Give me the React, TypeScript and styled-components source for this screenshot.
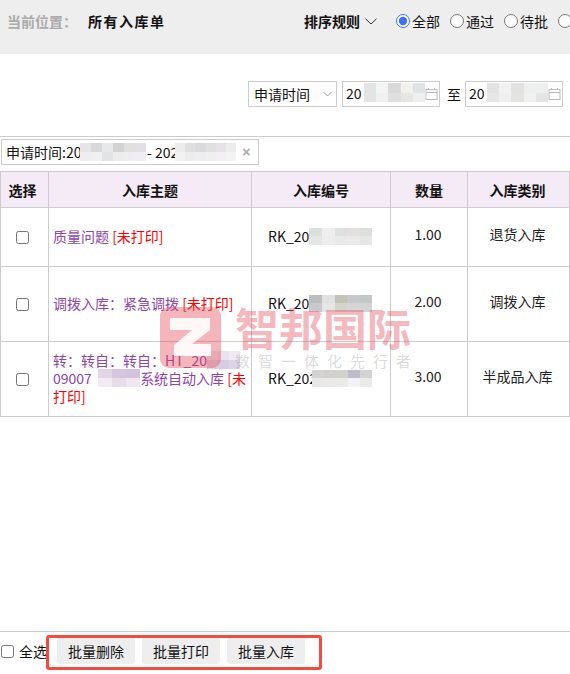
import React from 'react';
import styled, { createGlobalStyle } from 'styled-components';

const FONT = '"Noto Sans CJK SC", "Liberation Sans", sans-serif';
const BORDER = '#ccc';

const GlobalStyle = createGlobalStyle`
  html, body { margin: 0; padding: 0; background: #fff; }
  body { font-family: ${FONT}; font-size: 14px; color: #222; }
`;

const Page = styled.div`
  position: relative;
  width: 570px;
  height: 674px;
  overflow: hidden;
  display: flex;
  flex-direction: column;
`;

const Header = styled.header`
  height: 54px;
  flex: none;
  background: #eee;
  display: flex;
  align-items: flex-start;
  padding: 12px 0 0 7px;
  box-sizing: border-box;
  line-height: 18px;
  white-space: nowrap;
`;

const Crumb = styled.span`
  flex: none;
  color: #aaa;
  font-weight: 700;
  width: 81px;
`;

const CrumbCurrent = styled.span`
  flex: none;
  color: #111;
  font-weight: 700;
  letter-spacing: 1.5px;
  width: 216px;
`;

const SortLabel = styled.span`
  flex: none;
  display: flex;
  align-items: center;
  gap: 5px;
  color: #111;
  font-weight: 700;
  width: 92px;
`;

const RadioGroup = styled.div`
  flex: none;
  display: flex;
  gap: 10px;
`;

const RadioLabel = styled.label`
  display: flex;
  align-items: center;
  gap: 2px;
  height: 18px;
  color: #111;
`;

const Radio = styled.input`
  margin: 0;
  width: 14px;
  height: 14px;
  accent-color: #3f6ff5;
`;

const FilterBar = styled.div`
  height: 83px;
  flex: none;
  box-sizing: border-box;
  border-bottom: 1px solid ${BORDER};
  display: flex;
  justify-content: flex-end;
  align-items: flex-start;
  padding: 27px 7px 0 0;
  color: #111;
`;

const SelectBox = styled.div`
  width: 89px;
  height: 26px;
  box-sizing: border-box;
  border: 1px solid ${BORDER};
  display: flex;
  align-items: center;
  justify-content: space-between;
  padding: 0 4px 0 5px;
  margin-right: 5px;
`;

const DateBox = styled.div`
  width: 98px;
  height: 26px;
  box-sizing: border-box;
  border: 1px solid ${BORDER};
  display: flex;
  align-items: center;
  padding: 0 2px;
`;

const DateText = styled.span`
  width: 18px;
  flex: none;
  margin-left: 1px;
  margin-top: -2px;
`;

const DateBlur = styled.span`
  display: flex;
  flex: none;
  margin-top: -3px;
`;

const To = styled.span`
  line-height: 26px;
  margin: 0 4px 0 7px;
`;

const TagRow = styled.div`
  flex: none;
  height: 34px;
  padding: 2px 0 0 1px;
  box-sizing: border-box;
`;

const Tag = styled.div`
  width: 258px;
  height: 26px;
  box-sizing: border-box;
  border: 1px solid ${BORDER};
  display: flex;
  align-items: center;
  padding-left: 4px;
  color: #111;
  white-space: nowrap;
`;

const TagLead = styled.span`
  width: 74px;
  flex: none;
`;

const TagSep = styled.span`
  margin-left: 1px;
  width: 28px;
  flex: none;
`;

const TagClose = styled.span`
  margin-left: 6px;
  color: #aaa;
  font-size: 14px;
  font-weight: 700;
  font-family: "Liberation Sans", sans-serif;
`;

const Table = styled.table`
  width: 569px;
  table-layout: fixed;
  border-collapse: collapse;
  flex: none;
`;

const Th = styled.th<{ $shift?: number }>`
  height: 35px;
  padding: 0 ${(p) => p.$shift ?? 0}px 0 0;
  background: #f5ebf7;
  border: 1px solid ${BORDER};
  font-weight: 700;
  color: #111;
  line-height: 18px;
`;

const Row = styled.tr<{ $height: number }>`
  height: ${(p) => p.$height}px;
`;

const Td = styled.td`
  padding: 0;
  border: 1px solid ${BORDER};
  text-align: center;
  line-height: 18px;
  color: #222;
`;

const CheckCell = styled(Td)`
  padding-right: 5px;
`;

const TitleCell = styled(Td)`
  text-align: left;
  padding: 0 4px 2px;
  color: #8e44ad;
`;

const NotPrinted = styled.span`
  color: #f00;
`;

const CodeCell = styled(Td)`
  text-align: left;
  padding: 0 0 2px 16px;
`;

const ValueCell = styled(Td)`
  padding: 0 2px 6px 0;
`;

const Code = styled.div`
  display: flex;
  align-items: center;
  color: #111;
`;

const Box = styled.input`
  margin: 0;
  width: 13px;
  height: 13px;
`;

const CellBox = styled(Box)`
  display: block;
  margin: 0 auto;
`;

const Footer = styled.footer`
  position: relative;
  margin-top: auto;
  flex: none;
  height: 43px;
  box-sizing: border-box;
  border-top: 1px solid ${BORDER};
  display: flex;
  align-items: flex-start;
  padding: 6px 0 0 1px;
`;

const SelectAll = styled.label`
  display: flex;
  align-items: center;
  gap: 5px;
  height: 26px;
  width: 56px;
  flex: none;
  color: #111;
  line-height: 18px;
`;

const Buttons = styled.div`
  display: flex;
  gap: 7px;
`;

const BatchButton = styled.button`
  width: 78px;
  height: 26px;
  padding: 0;
  border: 0;
  border-radius: 3px;
  background: #eee;
  color: #111;
  font-family: ${FONT};
  font-size: 14px;
`;

const Highlight = styled.div`
  position: absolute;
  left: 46px;
  top: 3px;
  width: 276px;
  height: 35px;
  box-sizing: border-box;
  border: 3px solid #f44a40;
  border-radius: 3px;
  pointer-events: none;
`;

const MosaicGrid = styled.span<{ $cols: number; $w: number; $h: number; $overlap: number }>`
  display: inline-grid;
  grid-template-columns: repeat(${(p) => p.$cols}, ${(p) => p.$w}px);
  grid-auto-rows: ${(p) => p.$h}px;
  vertical-align: top;
  flex: none;
  margin-left: ${(p) => -p.$overlap}px;
`;

const MosaicCell = styled.span<{ $c: string }>`
  background: ${(p) => p.$c};
`;

type MosaicProps = { colors: string[]; cols: number; w: number; h: number; overlap?: number };

const Mosaic = ({ colors, cols, w, h, overlap = 0 }: MosaicProps) => (
  <MosaicGrid $cols={cols} $w={w} $h={h} $overlap={overlap}>
    {colors.map((c, i) => (
      <MosaicCell key={i} $c={c} />
    ))}
  </MosaicGrid>
);

const Watermark = styled.div`
  position: absolute;
  left: 160px;
  top: 307px;
  display: flex;
  gap: 14px;
  pointer-events: none;
`;

const WatermarkText = styled.div`
  display: flex;
  flex-direction: column;
  width: 176px;
`;

const WatermarkName = styled.div`
  font-size: 44px;
  line-height: 41px;
  font-weight: 700;
  color: rgba(228, 70, 85, 0.4);
  white-space: nowrap;
`;

const WatermarkSlogan = styled.div`
  margin-top: 4px;
  font-size: 15px;
  line-height: 18px;
  color: rgba(130, 130, 130, 0.3);
  display: flex;
  justify-content: space-between;
`;

const Chevron = () => (
  <svg width="12" height="7" viewBox="0 0 12 7" fill="none" stroke="#333" strokeWidth="1">
    <path d="M0.5 0.8 L6 6 L11.5 0.8" />
  </svg>
);

const SmallChevron = () => (
  <svg width="9" height="6" viewBox="0 0 9 6" fill="none" stroke="#999" strokeWidth="1">
    <path d="M0.5 1 L4.5 5 L8.5 1" />
  </svg>
);

const CalendarIcon = () => (
  <svg width="13" height="12" viewBox="0 0 13 12" fill="none" stroke="#bbb" strokeWidth="1" style={{ flex: 'none' }}>
    <rect x="1" y="1.5" width="11" height="10" />
    <path d="M1 4.5 H12 M3.5 0 V2 M9.5 0 V2" />
  </svg>
);

const Logo = () => (
  <svg width="61" height="61" viewBox="0 0 61 61">
    <rect width="61" height="61" rx="9" fill="rgba(228, 70, 85, 0.4)" />
    <path d="M10 11 H50 V23 L32 37 H51 V49 H14 V38 L32 23 H10 Z" fill="#fff" fillOpacity="0.9" />
  </svg>
);

const date1 = ['#e3e5e5', '#f4f4f4', '#d9d9d9', '#f1f1ee', '#dfe3e4', '#e3e5e5', '#f1f1f1', '#dfdfdf', '#e5e5e2', '#eef0f0'];
const date2 = ['#e3e3e3', '#f2f2f2', '#e2e2e2', '#eef0f0', '#eeeeee', '#e6e6e6', '#efefef', '#e3e3e0', '#f1f1ef', '#e5e5e5'];
const tag1 = ['#e5e5e8', '#d8d8d8', '#e7e7e7', '#d3d3d3', '#e0e0e0', '#e2e0e6', '#eeeeee', '#f0f0f0', '#e2e3e5', '#ececec', '#ededf0', '#efeff2'];
const tag2 = ['#ececec', '#dfdfdf', '#dadadd', '#e0e0e0', '#e6e2e6', '#ececec', '#f2f2f2', '#ececec', '#eeeeee', '#efefef', '#f2f0f2', '#f3f3f3'];
const code1 = ['#dcdfdc', '#eeeeee', '#dedfdf', '#e3e0e0', '#dcdfdc', '#e5e5e5', '#ececec', '#e9e9e9', '#eaeaea', '#e6e6e6'];
const code2 = ['#bcbec0', '#e0dfe2', '#c2c2b6', '#c8c8ca', '#c3c7c5', '#c9c9c9', '#e6e6e6', '#d4d4ca', '#d5d5d5', '#d2d5d3'];
const code3 = ['#d3d3d3', '#d2cfcf', '#d3d3cd', '#bfbccb', '#d1d4d2', '#e8e8e8', '#eae8e8', '#ebebe8', '#f3f3f5', '#ebecea'];
const title1 = ['#efe9f3', '#e8e2ee', '#efe9f3', '#dcd3e6', '#d6cbe2', '#dcd3e6'];
const title2 = ['#e2d6e6', '#d6c5de', '#d2c2dc', '#f1ecf3', '#e8dcea', '#efe6f2'];

const rows = [
  { height: 59, qty: '1.00', kind: '退货入库', colors: code1, prefix: 'RK_20', cw: 12.6, overlap: 0 },
  { height: 75, qty: '2.00', kind: '调拨入库', colors: code2, prefix: 'RK_20', cw: 12.6, overlap: 0 },
  { height: 75, qty: '3.00', kind: '半成品入库', colors: code3, prefix: 'RK_202', cw: 12, overlap: 5 },
];

const COLON = '\uFF1A';

const titles = [
  <>质量问题 <NotPrinted>[未打印]</NotPrinted></>,
  <>调拨入库{COLON}紧急调拨 <NotPrinted>[未打印]</NotPrinted></>,
  <>
    转{COLON}转自{COLON}转自{COLON}HT_20<Mosaic colors={title1} cols={3} w={11} h={9} /><br />
    09007&nbsp;&nbsp;<Mosaic colors={title2} cols={3} w={14} h={9} />系统自动入库 <NotPrinted>[未<br />打印]</NotPrinted>
  </>,
];

export default function App() {
  return (
    <Page>
      <GlobalStyle />
      <Header>
        <Crumb>当前位置{COLON}</Crumb>
        <CrumbCurrent>所有入库单</CrumbCurrent>
        <SortLabel>排序规则 <Chevron /></SortLabel>
        <RadioGroup>
          <RadioLabel><Radio type="radio" name="state" defaultChecked />全部</RadioLabel>
          <RadioLabel><Radio type="radio" name="state" />通过</RadioLabel>
          <RadioLabel><Radio type="radio" name="state" />待批</RadioLabel>
          <RadioLabel><Radio type="radio" name="state" /></RadioLabel>
        </RadioGroup>
      </Header>

      <FilterBar>
        <SelectBox>申请时间 <SmallChevron /></SelectBox>
        <DateBox>
          <DateText>20</DateText>
          <DateBlur><Mosaic colors={date1} cols={5} w={12.2} h={9.5} /></DateBlur>
          <CalendarIcon />
        </DateBox>
        <To>至</To>
        <DateBox>
          <DateText>20</DateText>
          <DateBlur><Mosaic colors={date2} cols={5} w={12.2} h={9.5} /></DateBlur>
          <CalendarIcon />
        </DateBox>
      </FilterBar>

      <TagRow>
        <Tag>
          <TagLead>申请时间:20</TagLead>
          <Mosaic colors={tag1} cols={6} w={11} h={9} />
          <TagSep> - 202</TagSep>
          <Mosaic colors={tag2} cols={6} w={10.2} h={9} />
          <TagClose>×</TagClose>
        </Tag>
      </TagRow>

      <Table>
        <colgroup>
          <col width="48" />
          <col width="203" />
          <col width="139" />
          <col width="77" />
          <col width="102" />
        </colgroup>
        <thead>
          <tr>
            <Th $shift={4}>选择</Th>
            <Th>入库主题</Th>
            <Th>入库编号</Th>
            <Th>数量</Th>
            <Th $shift={2}>入库类别</Th>
          </tr>
        </thead>
        <tbody>
          {rows.map((r, i) => (
            <Row key={r.qty} $height={r.height}>
              <CheckCell><CellBox type="checkbox" /></CheckCell>
              <TitleCell>{titles[i]}</TitleCell>
              <CodeCell>
                <Code>
                  {r.prefix}
                  <Mosaic colors={r.colors} cols={5} w={r.cw} h={8.5} overlap={r.overlap} />
                </Code>
              </CodeCell>
              <ValueCell>{r.qty}</ValueCell>
              <ValueCell>{r.kind}</ValueCell>
            </Row>
          ))}
        </tbody>
      </Table>

      <Footer>
        <SelectAll><Box type="checkbox" />全选</SelectAll>
        <Buttons>
          <BatchButton>批量删除</BatchButton>
          <BatchButton>批量打印</BatchButton>
          <BatchButton>批量入库</BatchButton>
        </Buttons>
        <Highlight />
      </Footer>

      <Watermark>
        <Logo />
        <WatermarkText>
          <WatermarkName>智邦国际</WatermarkName>
          <WatermarkSlogan>
            {'数智一体化先行者'.split('').map((ch) => (
              <span key={ch}>{ch}</span>
            ))}
          </WatermarkSlogan>
        </WatermarkText>
      </Watermark>
    </Page>
  );
}
